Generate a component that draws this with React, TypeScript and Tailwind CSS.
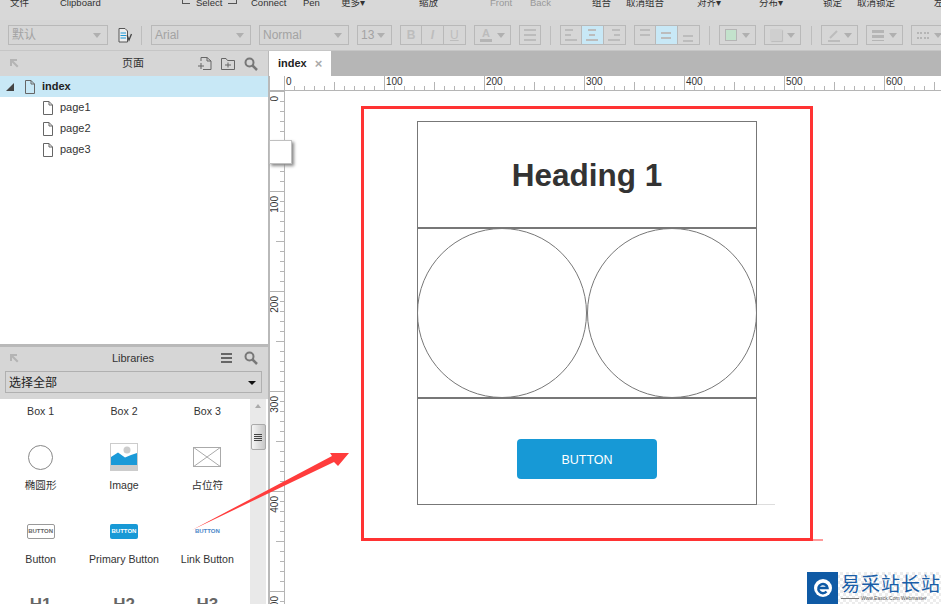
import React from "react";

const cjk = "font-['Liberation_Sans','Noto_Sans_CJK_SC',sans-serif]";

const topLabels: [string, string][] = [
  ["Connect", "w-[52px]"], ["Pen", "w-[38px]"], ["更多▾", "w-[78px]"], ["缩放", "w-[71px]"], ["Front", "w-[40px] text-[#999]"], ["Back", "w-[62px] text-[#999]"], ["组合", "w-[34px]"], ["取消组合", "w-[71px]"], ["对齐▾", "w-[62px]"], ["分布▾", "w-[64px]"], ["锁定", "w-[34px]"], ["取消锁定", "w-[77px]"], ["左", "w-[10px]"],
];

function Caret() {
  return <span className="shrink-0 w-0 h-0 border-l-[4px] border-r-[4px] border-t-[5px] border-l-transparent border-r-transparent border-t-[#b0b0b0]" />;
}

function Sel({ w, label, ml }: { w: string; label?: string; ml: string }) {
  return (
    <div className={`${w} ${ml} shrink-0 h-[20px] border border-[#b9b9b9] flex items-center justify-between pl-[3px] pr-[6px] text-[12px] text-[#a3a3a3]`}>
      <span>{label}</span>
      <Caret />
    </div>
  );
}

function Sep({ ml }: { ml: string }) {
  return <div className={`${ml} shrink-0 w-px h-[19px] bg-[#bdbdbd]`} />;
}

function Lines({ rows }: { rows: string[] }) {
  return (
    <div className="flex flex-col gap-[3px]">
      {rows.map((r, i) => <div key={i} className={`${r} h-[2px] bg-[#bcbcbc]`} />)}
    </div>
  );
}

function Seg({ on, children }: { on?: boolean; children: React.ReactNode }) {
  return <div className={`w-[21.33px] h-[18px] border-r border-[#b9b9b9] last:border-r-0 flex items-center justify-center ${on ? "bg-[#c8e8f6]" : ""}`}>{children}</div>;
}

function PageIcon() {
  return (
    <svg width="11" height="14" viewBox="0 0 11 14" fill="none" stroke="#666" strokeWidth="1">
      <path d="M1.5 .5H7L10.5 4V13.5H1.5Z M7 .5V4H10.5" />
    </svg>
  );
}

function Search() {
  return (
    <svg width="14" height="14" viewBox="0 0 14 14" fill="none" stroke="#777" strokeWidth="2">
      <circle cx="5.5" cy="5.5" r="4" /><path d="M8.5 8.5L13 13" strokeWidth="2.5" />
    </svg>
  );
}

function Corner() {
  return (
    <div className="w-0">
      <svg width="9" height="9" viewBox="0 0 9 9" fill="#b4b4b4"><path d="M0 0H7V2H3.5L8.5 7L7 8.5L2 3.5V7H0Z" /></svg>
    </div>
  );
}

function TopRuler() {
  const ticks = Array.from({ length: 66 }, (_, i) => i * 10);
  return (
    <svg width="671" height="15" className="block">
      {ticks.map((t) => {
        const x = 14.5 + t;
        const h = t % 100 === 0 ? 15 : t % 50 === 0 ? 8 : 4;
        return <line key={t} x1={x} x2={x} y1={14 - h} y2={14} stroke="#b5b5b5" />;
      })}
      <line x1="0" x2="671" y1="14.5" y2="14.5" stroke="#b5b5b5" />
      {[0, 100, 200, 300, 400, 500, 600].map((t) => (
        <text key={t} x={t + 16} y="9" fontSize="10" fill="#333" fontFamily="Liberation Sans">{t}</text>
      ))}
    </svg>
  );
}

function LeftRuler() {
  const ticks = Array.from({ length: 52 }, (_, i) => i * 10);
  return (
    <svg width="15" height="513" className="block shrink-0">
      {ticks.map((t) => {
        const y = t + 0.5;
        const h = t % 100 === 0 ? 14 : t % 50 === 0 ? 8 : 4;
        return <line key={t} x1={14 - h} x2={14} y1={y} y2={y} stroke="#b5b5b5" />;
      })}
      <line x1="14.5" x2="14.5" y1="0" y2="513" stroke="#b5b5b5" />
      {[0, 100, 200, 300, 400, 500].map((t) => (
        <text key={t} transform={`translate(8 ${t + 5}) rotate(-90)`} textAnchor="end" fontSize="10" fill="#333" fontFamily="Liberation Sans">{t}</text>
      ))}
    </svg>
  );
}

function Lib({ icon, label, h }: { icon: React.ReactNode; label: string; h: string }) {
  return (
    <div className={`${h} flex flex-col items-center`}>
      <div className="h-[28px] flex items-center justify-center">{icon}</div>
      <div className="mt-[7px] text-[10.6px] leading-[14px] text-[#333]">{label}</div>
    </div>
  );
}

export default function App() {
  return (
    <div className={`relative w-[941px] h-[604px] overflow-hidden bg-white flex flex-col ${cjk}`}>
      {/* menu labels */}
      <div className="h-[20px] shrink-0 bg-[#d8d8d8] overflow-hidden flex pl-[10px] text-[9.5px] leading-[12px] text-[#333] whitespace-nowrap">
        <div className="-mt-[3px] flex items-start">
          <span className="w-[50px] shrink-0">文件</span>
          <span className="w-[122px] shrink-0">Clipboard</span>
          <span className="mt-[3px] w-[8px] h-[4px] shrink-0 border-l border-b border-[#555] mr-[6px]" />
          <span className="w-[32px] shrink-0">Select</span>
          <span className="mt-[3px] w-[9px] h-[4px] shrink-0 border-r border-b border-[#555] mr-[14px]" />
          {topLabels.map(([t, w]) => (
            <span key={t} className={`${w} shrink-0`}>{t}</span>
          ))}
        </div>
      </div>

      {/* format toolbar */}
      <div className="h-[31px] shrink-0 bg-[#d6d6d6] border-b border-[#c6c6c6] flex items-center overflow-hidden">
        <Sel w="w-[100px]" ml="ml-[8px]" label="默认" />
        <div className="ml-[10px] shrink-0 w-[14px] h-[15px]">
          <svg width="14" height="15" viewBox="0 0 14 15" fill="none">
            <path d="M1 .5H7L9.5 3V14H1Z" stroke="#555" fill="#eee" />
            <path d="M2.5 5H8M2.5 7.5H8M2.5 10H8" stroke="#1c98d6" />
            <path d="M9 7L11 12L13.5 6" stroke="#444" strokeWidth="1.3" />
          </svg>
        </div>
        <Sep ml="ml-[9px]" />
        <Sel w="w-[100px]" ml="ml-[9px]" label="Arial" />
        <Sel w="w-[90px]" ml="ml-[8px]" label="Normal" />
        <Sel w="w-[35px]" ml="ml-[8px]" label="13" />
        <div className="ml-[8px] shrink-0 flex border border-[#b9b9b9] h-[20px] items-center text-[12px] text-[#bdbdbd] font-bold">
          <Seg>B</Seg><Seg><span className="italic">I</span></Seg><Seg><span className="underline font-normal">U</span></Seg>
        </div>
        <div className="ml-[8px] shrink-0 w-[37px] h-[20px] border border-[#b9b9b9] flex items-center justify-between px-[5px]">
          <div className="w-[12px] text-center text-[11px] leading-[11px] font-bold text-[#bcbcbc] border-b-[3px] border-[#b5b5b5]">A</div>
          <Caret />
        </div>
        <div className="ml-[8px] shrink-0 w-[22px] h-[20px] border border-[#b9b9b9] flex items-center justify-center">
          <Lines rows={["w-[12px]", "w-[12px]", "w-[12px]"]} />
        </div>
        <Sep ml="ml-[9px]" />
        <div className="ml-[9px] shrink-0 flex border border-[#b9b9b9] h-[20px]">
          <Seg><Lines rows={["w-[8px] mr-[4px]", "w-[6px] mr-[6px]", "w-[12px]"]} /></Seg>
          <Seg on><Lines rows={["w-[8px] mx-auto", "w-[6px] mx-auto", "w-[12px]"]} /></Seg>
          <Seg><Lines rows={["w-[8px] ml-[4px]", "w-[6px] ml-[6px]", "w-[12px]"]} /></Seg>
        </div>
        <div className="ml-[8px] shrink-0 flex border border-[#b9b9b9] h-[20px]">
          <Seg><div className="self-start mt-[3px]"><Lines rows={["w-[10px]", "w-[10px]"]} /></div></Seg>
          <Seg on><Lines rows={["w-[10px]", "w-[10px]"]} /></Seg>
          <Seg><div className="self-end mb-[2px]"><Lines rows={["w-[10px]", "w-[10px]"]} /></div></Seg>
        </div>
        <Sep ml="ml-[9px]" />
        <div className="ml-[9px] shrink-0 w-[37px] h-[20px] border border-[#b9b9b9] flex items-center justify-between pl-[5px] pr-[5px]">
          <div className="w-[12px] h-[12px] bg-[#c3e2cc] border border-[#b5b5b5]" /><Caret />
        </div>
        <div className="ml-[8px] shrink-0 w-[37px] h-[20px] border border-[#b9b9b9] flex items-center justify-between pl-[5px] pr-[5px]">
          <div className="w-[12px] h-[12px] bg-[#cfcfcf] rounded-[1px] shadow-[1px_1px_1px_#bcbcbc]" /><Caret />
        </div>
        <Sep ml="ml-[10px]" />
        <div className="ml-[9px] shrink-0 w-[37px] h-[20px] border border-[#b9b9b9] flex items-center justify-between pl-[5px] pr-[5px]">
          <svg width="14" height="14" viewBox="0 0 14 14" fill="none" stroke="#bcbcbc" strokeWidth="2"><path d="M3 10L10 3M1 13H13" /></svg><Caret />
        </div>
        <div className="ml-[8px] shrink-0 w-[37px] h-[20px] border border-[#b9b9b9] flex items-center justify-between pl-[5px] pr-[5px]">
          <div className="flex flex-col gap-[2px]">
            <div className="w-[12px] h-[3px] bg-[#b5b5b5]" /><div className="w-[12px] h-[3px] bg-[#b5b5b5]" /><div className="w-[12px] h-px bg-[#b5b5b5]" />
          </div><Caret />
        </div>
        <div className="ml-[8px] w-[37px] h-[20px] shrink-0 border border-[#b9b9b9] flex items-center justify-between pl-[5px] pr-[5px]">
          <div className="flex flex-col gap-[3px]">
            <div className="w-[12px] border-t-2 border-dotted border-[#b5b5b5]" /><div className="w-[12px] border-t-2 border-dotted border-[#b5b5b5]" />
          </div><Caret />
        </div>
      </div>

      <div className="flex flex-1 min-h-0">
        {/* left panels */}
        <div className="w-[268px] shrink-0 flex flex-col bg-white">
          <div className="h-[25px] shrink-0 bg-[#d6d6d6] flex items-center px-[10px] relative">
            <Corner />
            <span className="flex-1 text-center text-[11px] text-[#333] pr-[2px]">页面</span>
            <div className="flex items-center gap-[9px] absolute right-[10px]">
              <svg width="14" height="13" viewBox="0 0 14 13" fill="none" stroke="#666"><path d="M3 4V.5H9L13 4V12.5H5M9 .5V4H13M0 9H6M3 6V12" /></svg>
              <svg width="14" height="12" viewBox="0 0 14 12" fill="none" stroke="#666"><path d="M.5 11.5V.5H5L6.5 2.5H13.5V11.5Z M4 7H10M7 4.5V9.5" /></svg>
              <Search />
            </div>
          </div>
          <div className="h-[21px] shrink-0 bg-[#c8e8f6] flex items-center pl-[6px] text-[11px] font-bold text-[#222]">
            <span className="w-0 h-0 border-b-[8px] border-l-[8px] border-b-[#444] border-l-transparent" />
            <span className="ml-[10px] flex"><PageIcon /></span>
            <span className="ml-[7px]">index</span>
          </div>
          {["page1", "page2", "page3"].map((p) => (
            <div key={p} className="h-[21px] shrink-0 flex items-center pl-[42px] text-[11px] text-[#333]">
              <PageIcon /><span className="ml-[7px]">{p}</span>
            </div>
          ))}
          <div className="flex-1" />
          {/* libraries */}
          <div className="h-[260px] shrink-0 border-t-[3px] border-[#b9b9b9] flex flex-col overflow-hidden">
            <div className="shrink-0 h-[52px] bg-[#d6d6d6] flex flex-col">
              <div className="h-[24px] relative flex items-center px-[10px] pb-[2px]">
                <Corner />
                <span className="flex-1 text-center text-[11px] text-[#333] pr-[2px]">Libraries</span>
                <div className="flex items-center gap-[12px] absolute right-[10px]">
                  <div className="flex flex-col gap-[2px]">
                    <div className="w-[11px] h-[2px] bg-[#666]" /><div className="w-[11px] h-[2px] bg-[#666]" /><div className="w-[11px] h-[2px] bg-[#666]" />
                  </div>
                  <Search />
                </div>
              </div>
              <div className="ml-[5px] mr-[6px] h-[22px] border border-[#b0b0b0] flex items-center justify-between pl-[3px] pr-[5px] pt-[1px] text-[12px] text-[#222]">
                <span>选择全部</span>
                <span className="w-0 h-0 border-l-[4px] border-r-[4px] border-t-[4px] border-l-transparent border-r-transparent border-t-[#111]" />
              </div>
            </div>
            <div className="flex flex-1 min-h-0">
              <div className="w-[250px] -ml-[1px] grid grid-cols-3 content-start overflow-hidden">
                {["Box 1", "Box 2", "Box 3"].map((b) => (
                  <div key={b} className="h-[44px] pt-[5px] text-center text-[10.6px] leading-[14px] text-[#333]">{b}</div>
                ))}
                <Lib h="h-[74px]" label="椭圆形" icon={<div className="w-[25px] h-[25px] rounded-full border border-[#888]" />} />
                <Lib h="h-[74px]" label="Image" icon={
                  <svg width="28" height="28" viewBox="0 0 28 28"><rect x=".5" y=".5" width="27" height="27" fill="#fff" stroke="#ccc" /><circle cx="17" cy="7" r="3.5" fill="#ccc" /><path d="M1 14L8 9.5L15 14.5L21 12L27 10V22H1Z" fill="#1b9ad8" /><rect x="0" y="22" width="28" height="5" fill="#ccc" /></svg>
                } />
                <Lib h="h-[74px]" label="占位符" icon={
                  <svg width="28" height="20" viewBox="0 0 28 20" fill="none" stroke="#aaa"><rect x=".5" y=".5" width="27" height="19" /><path d="M0 0L28 20M28 0L0 20" /></svg>
                } />
                <Lib h="h-[76px]" label="Button" icon={<div className="w-[28px] h-[15px] border border-[#999] rounded-[2px] text-[6px] leading-[13px] font-bold text-center text-[#666]">BUTTON</div>} />
                <Lib h="h-[76px]" label="Primary Button" icon={<div className="w-[28px] h-[15px] bg-[#1799d6] rounded-[2px] text-[6px] leading-[15px] font-bold text-center text-white">BUTTON</div>} />
                <Lib h="h-[76px]" label="Link Button" icon={<div className="w-[28px] h-[15px] text-[6px] leading-[15px] font-bold text-center text-[#4a86c8]">BUTTON</div>} />
                {["H1", "H2", "H3"].map((h) => (
                  <div key={h} className="h-[24px] text-center text-[17px] font-bold text-[#666] leading-[24px]">{h}</div>
                ))}
              </div>
              <div className="ml-[1px] w-[16px] bg-[#e9e9e9] flex flex-col items-center pt-[5px]">
                <span className="w-0 h-0 border-l-[3px] border-r-[3px] border-b-[4px] border-l-transparent border-r-transparent border-b-[#aaa]" />
                <div className="mt-[16px] w-[15px] h-[26px] rounded-[2px] border border-[#aaa] bg-gradient-to-r from-[#f5f5f5] to-[#c8c8c8] flex flex-col items-center justify-center gap-[1px]">
                  <div className="w-[8px] h-px bg-[#444]" /><div className="w-[8px] h-px bg-[#444]" /><div className="w-[8px] h-px bg-[#444]" /><div className="w-[8px] h-px bg-[#444]" />
                </div>
              </div>
            </div>
          </div>
        </div>

        <div className="w-[2px] shrink-0 bg-[#b9b9b9]" />

        {/* work area */}
        <div className="flex-1 min-w-0 flex flex-col">
          <div className="h-[25px] shrink-0 bg-[#b6b6b6] flex">
            <div className="ml-[-1px] w-[62px] bg-white flex items-center pl-[9px] text-[11px] font-bold text-[#222]">
              index<span className="ml-[8px] text-[13px] leading-none text-[#aaa]">×</span>
            </div>
          </div>
          <TopRuler />
          <div className="flex flex-1 min-h-0">
            <div className="relative shrink-0">
              <LeftRuler />
              <div className="absolute left-[-1px] top-[49px] w-[23px] h-[24px] bg-white border border-[#c0c0c0] shadow-[2px_2px_3px_#888]" />
            </div>
            <div className="pl-[76px] pt-[15px]">
              <div className="w-[452px] h-[435px] border-[3px] border-[#ff3333] pl-[53px] pt-[12px]">
                <div className="w-[340px] h-[384px] border border-[#777] flex flex-col">
                  <div className="h-[107px] shrink-0 flex items-center justify-center pt-[2px] text-[31.5px] font-bold text-[#333] border-b-2 border-[#777]">Heading 1</div>
                  <div className="h-[170px] shrink-0 flex border-b-2 border-[#777] -ml-px -mr-px">
                    <div className="w-[170px] h-[170px] -mt-px shrink-0 rounded-full border border-[#777]" />
                    <div className="w-[170px] h-[170px] -mt-px shrink-0 rounded-full border border-[#777]" />
                  </div>
                  <div className="flex-1 flex items-center justify-center pt-[14px]">
                    <div className="w-[140px] h-[40px] pt-[3px] rounded-[4px] bg-[#1799d6] text-white text-[12.5px] flex items-center justify-center">BUTTON</div>
                  </div>
                </div>
              </div>
            </div>
          </div>
        </div>
      </div>

      {/* annotation arrow over everything */}
      <svg width="941" height="604" className="absolute inset-0 pointer-events-none">
        <polygon points="192,530 332,456 330,453 349,453 338,466 334,462" fill="#ff3c3c" />
        <path d="M757 504.5H775" stroke="#ddd" />
        <path d="M813 540H823" stroke="#ff9a9a" strokeWidth="2" />
      </svg>

      {/* watermark */}
      <div className="absolute left-[807px] top-[572px] w-[134px] h-[32px] flex bg-[repeating-conic-gradient(#ececec_0_25%,#ffffff_0_50%)] bg-[length:6px_6px]">
        <div className="w-[31px] h-[32px] bg-[#0f5aa5] flex items-center justify-center">
          <svg width="20" height="20" viewBox="0 0 20 20"><circle cx="10" cy="10" r="9" fill="#fff" /><path d="M5 10H14.5A4.6 4.6 0 1 0 13.5 13.5" fill="none" stroke="#0f5aa5" strokeWidth="2.4" /></svg>
        </div>
        <div className="flex-1 pl-[3px] flex flex-col overflow-hidden">
          <div className="text-[19px] leading-[22px] text-[#1a5ea8] whitespace-nowrap tracking-[1px] font-['Noto_Sans_CJK_SC',sans-serif]">易采站长站</div>
          <div className="flex items-center">
            <div className="w-[18px] h-px bg-[#777] shrink-0" />
            <div className="ml-[2px] text-[5px] leading-[8px] text-[#555] whitespace-nowrap">Www.Easck.Com Webmaster</div>
          </div>
        </div>
      </div>
    </div>
  );
}
